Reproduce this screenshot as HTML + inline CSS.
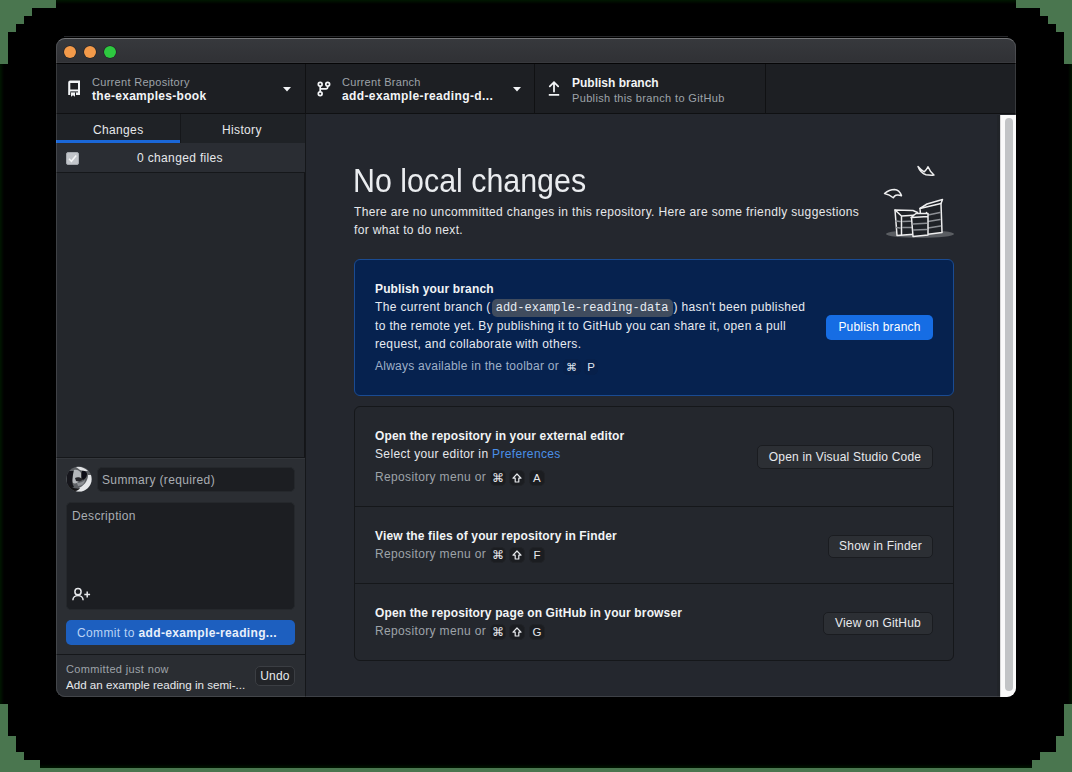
<!DOCTYPE html>
<html><head><meta charset="utf-8">
<style>
*{box-sizing:border-box;margin:0;padding:0}
html,body{width:1072px;height:772px;overflow:hidden;background:#000}
body{position:relative;font-family:"Liberation Sans",sans-serif;color:#e6e8eb}
.g{position:absolute;background:#4a764f}
.win{position:absolute;left:56px;top:38px;width:960px;height:659px;border-radius:9px;overflow:hidden;background:#24272d}
.wb{position:absolute;left:56px;top:38px;width:960px;height:659px;border-radius:9px;border:1px solid rgba(255,255,255,0.12);border-top-color:rgba(255,255,255,0.3);pointer-events:none}
.abs{position:absolute}
.title{position:absolute;left:0;top:0;width:960px;height:25px;background:linear-gradient(#37393d,#303135);border-bottom:1px solid #38393d}
.tl{position:absolute;top:8px;width:12px;height:12px;border-radius:50%;box-shadow:0 0 0 0.5px rgba(0,0,0,0.5)}
.toolbar{position:absolute;left:0;top:25px;width:960px;height:51px;background:#1d1f23;border-top:1px solid #050506;border-bottom:1px solid #0f1012}
.sep{position:absolute;top:0;width:1px;height:50px;background:#101113}
.t11{font-size:11px;color:#9ea3a9;white-space:nowrap;letter-spacing:0.3px}
.tb{font-size:12px;font-weight:bold;color:#f2f4f6;white-space:nowrap;letter-spacing:0.3px}
.side{position:absolute;left:0;top:76px;width:249px;height:583px;background:#24272c;border-right:1px solid #141518}
.main{position:absolute;left:250px;top:76px;width:694px;height:583px;background:#24272e}
.txt{white-space:nowrap;font-size:12px;letter-spacing:0.35px}
.card{position:absolute;border-radius:6px}
.btn{position:absolute;background:#2c2f34;border:1px solid #1a1c20;border-radius:5px;font-size:12px;color:#e8eaed;text-align:center;white-space:nowrap;letter-spacing:0.2px}
.key{display:inline-block;height:16px;line-height:14px;border-radius:5px;background:#1b1d21;border:1px solid #202226;font-size:11.5px;text-align:center;color:#e6e8eb;vertical-align:middle}
</style></head><body>
<div class="abs" style="left:0;top:0;width:1072px;height:4px;background:linear-gradient(#001600,rgba(0,0,0,0))"></div>
<div class="abs" style="left:0;top:764px;width:1072px;height:4px;background:linear-gradient(rgba(0,0,0,0),#001600)"></div>
<div class="abs" style="left:0;top:0;width:4px;height:772px;background:linear-gradient(90deg,#001600,rgba(0,0,0,0))"></div>
<div class="abs" style="right:0;top:0;width:4px;height:772px;background:linear-gradient(90deg,rgba(0,0,0,0),#001600)"></div>
<!-- green corners -->
<div class="g" style="left:0;top:0;width:56px;height:8px"></div>
<div class="g" style="left:0;top:8px;width:32px;height:8px"></div>
<div class="g" style="left:0;top:16px;width:24px;height:8px"></div>
<div class="g" style="left:0;top:24px;width:16px;height:8px"></div>
<div class="g" style="left:0;top:32px;width:8px;height:32px"></div>

<div class="g" style="left:1016px;top:0;width:56px;height:8px"></div>
<div class="g" style="left:1040px;top:8px;width:32px;height:8px"></div>
<div class="g" style="left:1048px;top:16px;width:24px;height:8px"></div>
<div class="g" style="left:1056px;top:24px;width:16px;height:8px"></div>
<div class="g" style="left:1064px;top:32px;width:8px;height:32px"></div>

<div class="g" style="left:0;top:704px;width:8px;height:32px"></div>
<div class="g" style="left:0;top:736px;width:16px;height:16px"></div>
<div class="g" style="left:0;top:752px;width:24px;height:8px"></div>
<div class="g" style="left:0;top:760px;width:40px;height:8px"></div>
<div class="g" style="left:0;top:768px;width:1072px;height:4px"></div>

<div class="g" style="left:1064px;top:704px;width:8px;height:32px"></div>
<div class="g" style="left:1056px;top:736px;width:16px;height:16px"></div>
<div class="g" style="left:1040px;top:752px;width:32px;height:8px"></div>
<div class="g" style="left:1032px;top:760px;width:40px;height:8px"></div>

<div class="abs" style="left:64px;top:36px;width:944px;height:1px;background:#26272a"></div>
<div class="win">
  <div class="title">
    <div class="tl" style="left:8px;background:#f39a4a"></div>
    <div class="tl" style="left:28px;background:#f39a4a"></div>
    <div class="tl" style="left:48px;background:#2ec840"></div>
  </div>
  <div class="toolbar">
    <!-- repo -->
    <svg class="abs" style="left:11px;top:15px" width="16" height="20" viewBox="0 0 16 20"><path d="M1.2 3.5a2 2 0 0 1 2-2H13v14.5H1.2z" fill="#f2f4f6"/><rect x="3.3" y="4" width="7.7" height="6.5" fill="#1d1f23"/><rect x="3.3" y="12.4" width="7.7" height="1" fill="#1d1f23"/><rect x="3.2" y="13.3" width="5.8" height="2.8" fill="#1d1f23"/><path d="M4 13.5h4v4.2l-2-1.4-2 1.4z" fill="#f2f4f6"/></svg>
    <div class="abs t11" style="left:36px;top:12px">Current Repository</div>
    <div class="abs tb" style="left:36px;top:25px">the-examples-book</div>
    <svg class="abs" style="left:227px;top:23px" width="8" height="5"><path d="M0 0h8L4 4.5z" fill="#f2f4f6"/></svg>
    <div class="sep" style="left:249px"></div>
    <!-- branch -->
    <svg class="abs" style="left:261px;top:16px" width="14" height="17" viewBox="0 0 14 17"><g fill="none" stroke="#f2f4f6" stroke-width="1.7"><circle cx="3.2" cy="4.2" r="1.9"/><circle cx="10.7" cy="4.2" r="1.9"/><circle cx="3.2" cy="13.7" r="1.9"/><path d="M3.2 6.1v5.7M10.7 6.1v1.2c0 1-0.5 1.5-1.5 1.5H3.2"/></g></svg>
    <div class="abs t11" style="left:286px;top:12px">Current Branch</div>
    <div class="abs tb" style="left:286px;top:25px;letter-spacing:0.38px">add-example-reading-d...</div>
    <svg class="abs" style="left:457px;top:23px" width="8" height="5"><path d="M0 0h8L4 4.5z" fill="#f2f4f6"/></svg>
    <div class="sep" style="left:478px"></div>
    <!-- publish -->
    <svg class="abs" style="left:492px;top:16px" width="12" height="17" viewBox="0 0 12 17"><path d="M6 11.5V2.6M1.8 6.4L6 2.2l4.2 4.2" fill="none" stroke="#f2f4f6" stroke-width="1.8" stroke-linecap="round"/><path d="M0.8 14.9h10.4" stroke="#f2f4f6" stroke-width="1.9"/></svg>
    <div class="abs tb" style="left:516px;top:12px;letter-spacing:0">Publish branch</div>
    <div class="abs t11" style="left:516px;top:28px;letter-spacing:0.35px">Publish this branch to GitHub</div>
    <div class="sep" style="left:709px"></div>
  </div>

  <div class="side">
    <div class="abs" style="left:0;top:0;width:249px;height:29px;background:#1f2226"></div>
    <div class="abs" style="left:0;top:26px;width:124px;height:3px;background:#1a67d8"></div>
    <div class="abs" style="left:124px;top:0;width:1px;height:29px;background:#15171a"></div>
    <div class="abs txt" style="left:37px;top:9px">Changes</div>
    <div class="abs txt" style="left:166px;top:9px">History</div>
    <div class="abs" style="left:0;top:29px;width:249px;height:30px;background:#2a2d33;border-bottom:1px solid #15171a"></div>
    <div class="abs" style="left:10px;top:38px;width:13px;height:13px;border-radius:2px;background:#c2c5ca;border:1px solid #a4a8ae"></div><svg class="abs" style="left:10px;top:38px" width="13" height="13"><path d="M3 6.8L5.4 9.2L10.2 3.6" fill="none" stroke="#f4f5f6" stroke-width="1.6"/></svg>
    <div class="abs txt" style="left:81px;top:37px">0 changed files</div>

    <div class="abs" style="left:0;top:343px;width:249px;height:240px;background:#2b2e33;border-top:1px solid #15171a"></div><div class="abs" style="left:0;top:344px;width:249px;height:1px;background:#34373c"></div>
    <svg class="abs" style="left:10px;top:352px" width="26" height="26" viewBox="0 0 26 26"><defs><clipPath id="av"><circle cx="13" cy="13" r="12.6"/></clipPath><filter id="bl"><feGaussianBlur stdDeviation="0.7"/></filter></defs><g clip-path="url(#av)"><rect width="26" height="26" fill="#5d6064"/><g filter="url(#bl)"><path d="M10 1c4-1 9 1 12 4-3 0-6 0-8-1z" fill="#dfe1e3"/><path d="M1 5h8c1 2 0 5-2 7-1 3-1 6 1 9l-7 2z" fill="#17181a"/><path d="M8 4c3-1 6 1 7 3 1 3 0 6-2 8-1 2-4 3-6 2-1-3 0-9 1-13z" fill="#b4b7ba"/><path d="M16 5c2-1 5 1 5 3 0 3-2 5-4 6-2-1-2-6-1-9z" fill="#0f1012"/><path d="M9 12c2-1 5-1 8 1-1 2-4 3-7 2z" fill="#26272a"/><path d="M22 9c0 6-4 11-11 14l-1 4h17V9z" fill="#e6e8ea"/><path d="M3 19c3 3 7 4 11 3-1 2-3 3-6 3-3-1-5-3-5-6z" fill="#151618"/><path d="M11 17c3 0 6-1 8-3 0 3-3 6-7 6z" fill="#8e9195"/></g></g></svg>
    <div class="abs" style="left:41px;top:353px;width:198px;height:25px;border-radius:5px;background:#1c1e22;border:1px solid #25282c"></div>
    <div class="abs txt" style="left:46px;top:359px;color:#a9adb2">Summary (required)</div>
    <div class="abs" style="left:10px;top:388px;width:229px;height:108px;border-radius:5px;background:#1c1e22;border:1px solid #25282c"></div>
    <div class="abs txt" style="left:16px;top:395px;color:#a9adb2">Description</div>
    <svg class="abs" style="left:16px;top:472px" width="20" height="15" viewBox="0 0 20 15"><circle cx="6" cy="5.7" r="3.1" fill="none" stroke="#e6e8eb" stroke-width="1.5"/><path d="M0.9 14.2c0-2.8 2.3-4.8 5.1-4.8s5.1 2 5.1 4.8" fill="none" stroke="#e6e8eb" stroke-width="1.5"/><path d="M15.2 5.6v5.8M12.3 8.5h5.8" stroke="#e6e8eb" stroke-width="1.5"/></svg>
    <div class="abs" style="left:10px;top:506px;width:229px;height:25px;border-radius:5px;background:#1d5fbf"></div>
    <div class="abs txt" style="left:21px;top:512px;color:#b9d3f5">Commit to <b style="color:#e8f0fb">add-example-reading...</b></div>
    <div class="abs" style="left:0;top:540px;width:249px;height:43px;background:#2a2d32;border-top:1px solid #15171a"></div>
    <div class="abs txt" style="left:10px;top:549px;font-size:11px;color:#9ea3a9">Committed just now</div>
    <div class="abs txt" style="left:10px;top:564px;color:#e6e8eb;font-size:11.6px;letter-spacing:0">Add an example reading in semi-...</div>
    <div class="btn" style="left:199px;top:552px;width:40px;height:20px;line-height:19px;background:#222428;border-color:#3b3e43">Undo</div>
  </div>

  <div class="abs" style="left:249px;top:76px;width:1px;height:583px;background:#15171a"></div>
  <div class="main">
    <div class="abs" style="left:47px;top:49px;font-size:32.5px;color:#eaecef;white-space:nowrap;transform:scaleX(0.935);transform-origin:0 0">No local changes</div>
    <div class="abs txt" style="left:48px;top:89px;line-height:18px;color:#e6e8eb">There are no uncommitted changes in this repository. Here are some friendly suggestions<br>for what to do next.</div>

    <!-- illustration -->
    <svg class="abs" style="left:574px;top:46px" width="80" height="80" viewBox="0 0 80 80">
      <ellipse cx="40" cy="74" rx="34" ry="3.8" fill="#5a5d62"/>
      <g fill="none" stroke="#eeeeef" stroke-width="1.5" stroke-linejoin="round" stroke-linecap="round">
        <path d="M38 6.5c1.5 4 4 7 8 8.2c3 0.5 5.5 0.6 8 0.3c-2.5-2-4.5-4.5-6-8.2c-1 2.2-2.2 3.8-3.8 5c-2.2-1.2-4.2-3-6.2-5.3z" fill="#1f2227"/>
        <path d="M4.5 33.5c3-2.5 6.5-4 10-4c3 0.2 5.5 2.2 7 6.2c-2-0.8-4-1-5.6-0.5c-1.2 0.5-2 1.5-2.6 2.6c-2.5-2.2-5.5-3.6-8.8-4.3z" fill="#1f2227"/>
        <path d="M40 48.5L47 44L62.5 39.5L61 43.5L62 72.5L42 75Z" fill="#1f2227"/>
      </g>
      <path fill="none" stroke="#8c8f94" stroke-width="1.6" stroke-linecap="round" d="M48 55L60 52.5M48 61.5L60 59.5M48 68L60.5 66M41.5 55.5L45.5 54.5M42 62L45.5 61.5M42 68.5L45.5 68"/>
      <path fill="none" stroke="#eeeeef" stroke-width="1.5" stroke-linejoin="round" stroke-linecap="round" d="M40 48.5L61 43.5M46.5 52.5L46.5 74.5"/>
      <path fill="#1f2227" stroke="#eeeeef" stroke-width="1.5" stroke-linejoin="round" stroke-linecap="round" d="M15 50L33 50.5L37.5 52.5L37 74L17 75.5Z"/>
      <path fill="none" stroke="#8c8f94" stroke-width="1.6" stroke-linecap="round" d="M23 61.5L35.5 61M23 67.5L35.5 67.5M16 61L20 61.5M16.5 67.5L20 68"/>
      <path fill="none" stroke="#eeeeef" stroke-width="1.5" stroke-linejoin="round" stroke-linecap="round" d="M15 50L21.5 56L37.5 55M21.5 56L21.5 75"/>
      <path fill="#1f2227" stroke="#eeeeef" stroke-width="1.5" stroke-linejoin="round" stroke-linecap="round" d="M31 57.5L36 53.5L48 53.5L48 75L33 76.5L31.5 57.5L48 56.5"/>
      <path fill="none" stroke="#8c8f94" stroke-width="1.6" stroke-linecap="round" d="M33 64L46.5 63.2M33.5 70L46.5 69.5"/>
    </svg>

    <!-- publish card -->
    <div class="card" style="left:48px;top:145px;width:600px;height:137px;background:#06224f;border:1px solid #1a4b92">
      <div class="abs txt" style="left:20px;top:22px;font-weight:bold;letter-spacing:0.14px;color:#f2f4f6">Publish your branch</div>
      <div class="abs txt" style="left:20px;top:38px;line-height:18px;color:#e6ebf2">The current branch (<span style="font-family:'Liberation Mono';background:#3b4a60;border-radius:4px;padding:1px 4px;margin:0 1px;letter-spacing:0;line-height:16px;display:inline-block;background:#404c5e;border-radius:5px">add-example-reading-data</span>) hasn't been published<br>to the remote yet. By publishing it to GitHub you can share it, open a pull<br>request, and collaborate with others.</div>
      <div class="abs txt" style="left:20px;top:99px;color:#9fb0c8;letter-spacing:0.25px">Always available in the toolbar or <span class="key" style="width:18px;background:#07204a;border-color:#07204a;font-size:11px;color:#dfe6f0">⌘</span> <span class="key" style="width:14px;background:#07204a;border-color:#07204a;color:#dfe6f0">P</span></div>
      <div class="abs" style="left:471px;top:55px;width:107px;height:25px;border-radius:5px;background:#166de4;color:#fff;font-size:12px;text-align:center;line-height:25px;letter-spacing:0.2px">Publish branch</div>
    </div>

    <!-- actions card -->
    <div class="card" style="left:48px;top:292px;width:600px;height:255px;background:#24272d;border:1px solid #15171a">
      <div class="abs" style="left:0;top:99px;width:598px;height:1px;background:#15171a"></div>
      <div class="abs" style="left:0;top:176px;width:598px;height:1px;background:#15171a"></div>
      <div class="abs txt" style="left:20px;top:22px;font-weight:bold;letter-spacing:0.14px;color:#f2f4f6">Open the repository in your external editor</div>
      <div class="abs txt" style="left:20px;top:40px;color:#e6e8eb">Select your editor in <span style="color:#4a8fe8">Preferences</span></div>
      <div class="abs txt" style="left:20px;top:63px;color:#9ea3a9">Repository menu or <span class="key" style="width:16px">⌘</span> <span class="key" style="width:16px"><svg width="10" height="10" viewBox="0 0 10 10" style="vertical-align:-1px"><path d="M5 1L9 5.2H6.8V9H3.2V5.2H1z" fill="none" stroke="#e6e8eb" stroke-width="1.2" stroke-linejoin="round"/></svg></span> <span class="key" style="width:16px">A</span></div>
      <div class="btn" style="left:402px;top:38px;width:176px;height:24px;line-height:22px">Open in Visual Studio Code</div>

      <div class="abs txt" style="left:20px;top:122px;font-weight:bold;letter-spacing:0.14px;color:#f2f4f6">View the files of your repository in Finder</div>
      <div class="abs txt" style="left:20px;top:140px;color:#9ea3a9">Repository menu or <span class="key" style="width:16px">⌘</span> <span class="key" style="width:16px"><svg width="10" height="10" viewBox="0 0 10 10" style="vertical-align:-1px"><path d="M5 1L9 5.2H6.8V9H3.2V5.2H1z" fill="none" stroke="#e6e8eb" stroke-width="1.2" stroke-linejoin="round"/></svg></span> <span class="key" style="width:16px">F</span></div>
      <div class="btn" style="left:473px;top:128px;width:105px;height:23px;line-height:21px">Show in Finder</div>

      <div class="abs txt" style="left:20px;top:199px;font-weight:bold;letter-spacing:0.14px;color:#f2f4f6">Open the repository page on GitHub in your browser</div>
      <div class="abs txt" style="left:20px;top:217px;color:#9ea3a9">Repository menu or <span class="key" style="width:16px">⌘</span> <span class="key" style="width:16px"><svg width="10" height="10" viewBox="0 0 10 10" style="vertical-align:-1px"><path d="M5 1L9 5.2H6.8V9H3.2V5.2H1z" fill="none" stroke="#e6e8eb" stroke-width="1.2" stroke-linejoin="round"/></svg></span> <span class="key" style="width:16px">G</span></div>
      <div class="btn" style="left:468px;top:205px;width:110px;height:23px;line-height:21px">View on GitHub</div>
    </div>
  </div>

  <!-- scrollbar -->
  <div class="abs" style="left:941px;top:77px;width:3px;height:582px;background:#212429"></div>
  <div class="abs" style="left:944px;top:77px;width:16px;height:582px;background:#fafafa;border-left:1px solid #d8d8d8"></div>
  <div class="abs" style="left:949px;top:80px;width:8px;height:573px;border-radius:4px;background:#c2c4c6"></div>
</div>
<div class="wb"></div>
</body></html>
